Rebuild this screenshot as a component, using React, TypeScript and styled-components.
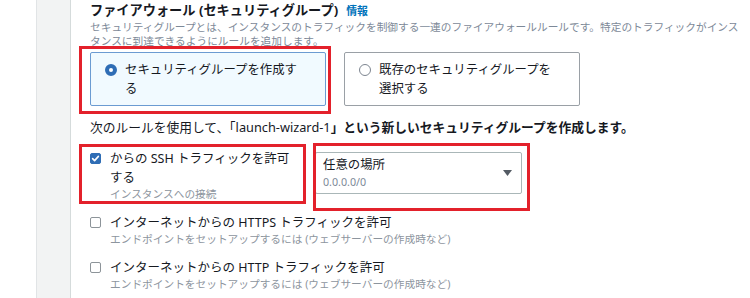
import React from 'react';
import styled, { createGlobalStyle } from 'styled-components';

const GlobalStyle = createGlobalStyle`
  html, body {
    margin: 0;
    padding: 0;
    background: #ffffff;
  }
  body {
    font-family: 'Noto Sans', 'Noto Sans CJK JP', sans-serif;
    color: #16191f;
  }
`;

const Page = styled.div`
  display: flex;
  width: 750px;
  height: 298px;
  overflow: hidden;
  background: #ffffff;
`;

const SideRail = styled.div`
  flex: 0 0 auto;
  width: 33px;
  margin-left: 36px;
  background: #f2f3f3;
  border-left: 1px solid #e1e4e6;
  border-right: 1px solid #d5dbdb;
`;

const Main = styled.div`
  flex: 1;
  display: flex;
  flex-direction: column;
  padding: 1px 0 0 19px;
  min-width: 0;
`;

const Title = styled.div`
  display: flex;
  align-items: baseline;
  gap: 8px;
  font-size: 13.2px;
  font-weight: 700;
  line-height: 18px;
  color: #16191f;
`;

const InfoLink = styled.span`
  font-size: 10.9px;
  font-weight: 700;
  color: #0073bb;
`;

const Description = styled.div`
  width: 656px;
  font-size: 10.7px;
  line-height: 14px;
  color: #7d8998;
`;

// red annotation frame drawn over a part
const Highlight = styled.div<{ $inset: string }>`
  position: relative;
  &::after {
    content: '';
    position: absolute;
    inset: ${(p) => p.$inset};
    border: 3px solid #e3212b;
    pointer-events: none;
  }
`;

const Cards = styled.div`
  display: grid;
  grid-template-columns: 236px 236px;
  column-gap: 18px;
  margin-top: 4px;
`;

const Card = styled.div<{ $selected?: boolean }>`
  box-sizing: border-box;
  display: flex;
  align-items: flex-start;
  gap: 8px;
  height: 54px;
  padding: 7px 16px 7px 14px;
  border: 1px solid ${(p) => (p.$selected ? '#6b9bd2' : '#9aa0a6')};
  border-radius: 2px;
  background: ${(p) => (p.$selected ? '#f1faff' : '#ffffff')};
  font-size: 12.4px;
  line-height: 19px;
  color: #16191f;
`;

const Radio = styled.span<{ $checked?: boolean }>`
  flex: 0 0 auto;
  box-sizing: border-box;
  width: 12px;
  height: 12px;
  margin-top: 4px;
  border-radius: 50%;
  background: #ffffff;
  border: ${(p) => (p.$checked ? '4px solid #2f6db5' : '1px solid #7d8590')};
`;

const RuleText = styled.div`
  margin-top: 12px;
  font-size: 12.75px;
  line-height: 19px;
  color: #16191f;
`;

const Strong = styled.span`
  font-weight: 700;
`;

const SshRow = styled.div`
  display: flex;
  align-items: flex-start;
  gap: 19px;
  margin-top: 12px;
`;

const CheckOption = styled.div<{ $labelWidth?: number }>`
  display: flex;
  align-items: flex-start;
  gap: 9px;

  & > div {
    width: ${(p) => (p.$labelWidth ? `${p.$labelWidth}px` : 'auto')};
  }
`;

const Box = styled.span<{ $checked?: boolean }>`
  flex: 0 0 auto;
  box-sizing: border-box;
  display: flex;
  align-items: center;
  justify-content: center;
  width: 11px;
  height: 11px;
  margin-top: 4px;
  border-radius: 2px;
  background: ${(p) => (p.$checked ? '#2f6db5' : '#ffffff')};
  border: 1px solid ${(p) => (p.$checked ? '#2f6db5' : '#8d9499')};
`;

const OptionLabel = styled.div`
  font-size: 12.5px;
  line-height: 19px;
  color: #16191f;
`;

const OptionHint = styled.div`
  font-size: 10.7px;
  line-height: 14px;
  color: #8d959e;
`;

const OptionList = styled.div`
  display: flex;
  flex-direction: column;
  gap: 12px;
  margin-top: 12px;
`;

const SelectBox = styled.div`
  box-sizing: border-box;
  display: flex;
  align-items: center;
  justify-content: space-between;
  width: 207px;
  height: 42px;
  margin-top: 3px;
  padding: 0 9px 0 7px;
  border: 1px solid #aab7b8;
  border-radius: 2px;
  background: #ffffff;
`;

const SelectValue = styled.div`
  font-size: 12.4px;
  line-height: 18px;
  color: #16191f;
`;

const SelectSub = styled.div`
  font-size: 10.7px;
  line-height: 17px;
  color: #7d8998;
`;

const Check = () => (
  <svg width='9' height='9' viewBox='0 0 9 9'>
    <polyline points='1.6,4.6 3.6,6.6 7.4,2.4' fill='none' stroke='#ffffff' strokeWidth='1.6' strokeLinecap='round' strokeLinejoin='round' />
  </svg>
);

const Caret = () => (
  <svg width='9' height='6' viewBox='0 0 9 6'>
    <path d='M0 0 L9 0 L4.5 6 Z' fill='#545b64' />
  </svg>
);

const hint = 'エンドポイントをセットアップするには (ウェブサーバーの作成時など)';

const App = () => {
  return (
    <Page>
      <GlobalStyle />
      <SideRail />
      <Main>
        <Title>
          ファイアウォール (セキュリティグループ)
          <InfoLink>情報</InfoLink>
        </Title>
        <Description>
          セキュリティグループとは、インスタンスのトラフィックを制御する一連のファイアウォールルールです。特定のトラフィックがインスタンスに到達できるようにルールを追加します。
        </Description>

        <Cards>
          <Highlight $inset='-6px -5px -8px -11px'>
            <Card $selected>
              <Radio $checked />
              <span>セキュリティグループを作成する</span>
            </Card>
          </Highlight>
          <Card>
            <Radio />
            <span>既存のセキュリティグループを選択する</span>
          </Card>
        </Cards>

        <RuleText>
          次のルールを使用して、「launch-wizard-1<Strong>」という新しいセキュリティグループを作成します。</Strong>
        </RuleText>

        <SshRow>
          <Highlight $inset='-5px -10px -3px -11px'>
            <CheckOption $labelWidth={186}>
              <Box $checked>
                <Check />
              </Box>
              <div>
                <OptionLabel>からの SSH トラフィックを許可する</OptionLabel>
                <OptionHint>インスタンスへの接続</OptionHint>
              </div>
            </CheckOption>
          </Highlight>
          <Highlight $inset='-6px -8px -17px -2px'>
            <SelectBox>
              <div>
                <SelectValue>任意の場所</SelectValue>
                <SelectSub>0.0.0.0/0</SelectSub>
              </div>
              <Caret />
            </SelectBox>
          </Highlight>
        </SshRow>

        <OptionList>
          <CheckOption>
            <Box />
            <div>
              <OptionLabel>インターネットからの HTTPS トラフィックを許可</OptionLabel>
              <OptionHint>{hint}</OptionHint>
            </div>
          </CheckOption>
          <CheckOption>
            <Box />
            <div>
              <OptionLabel>インターネットからの HTTP トラフィックを許可</OptionLabel>
              <OptionHint>{hint}</OptionHint>
            </div>
          </CheckOption>
        </OptionList>
      </Main>
    </Page>
  );
};

export default App;
